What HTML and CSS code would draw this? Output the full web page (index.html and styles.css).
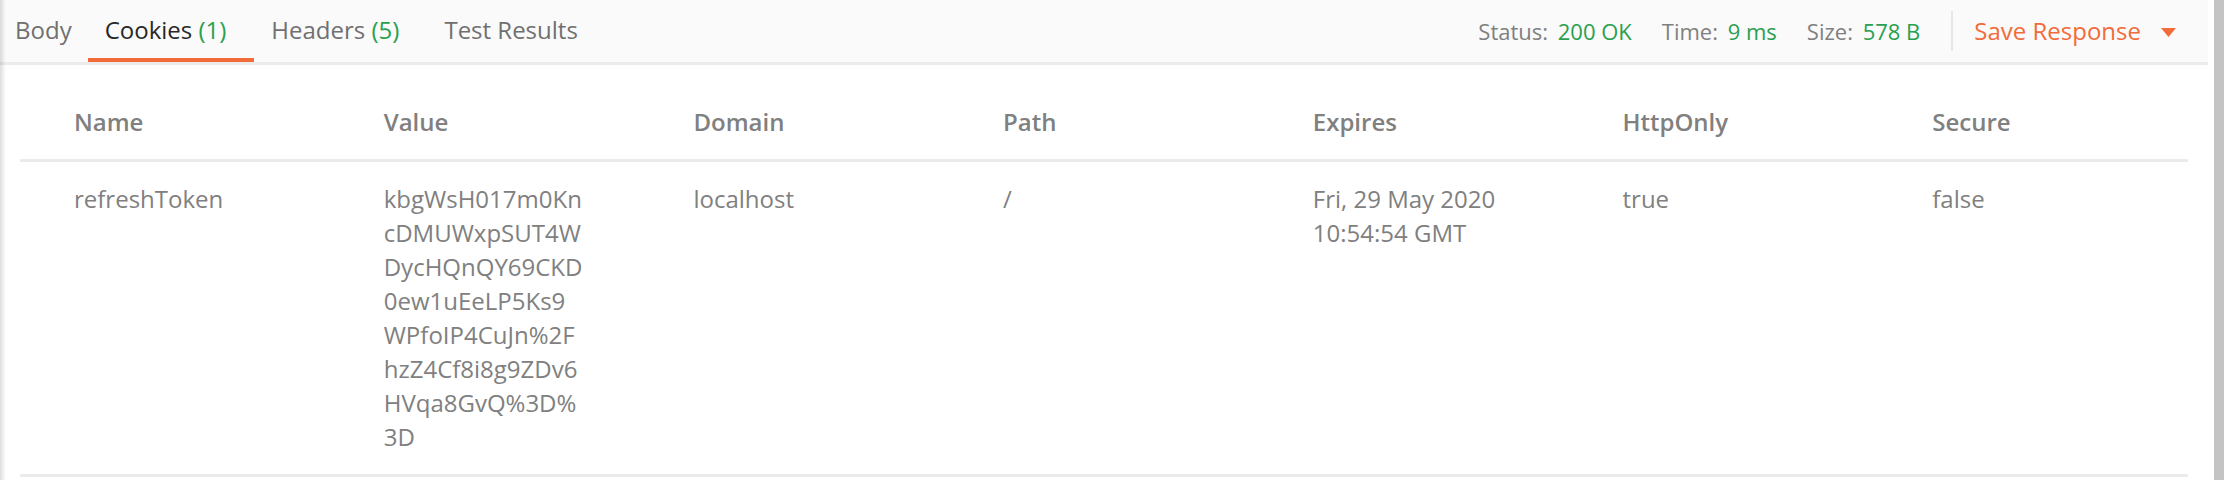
FILE: index.html
```html
<!DOCTYPE html>
<html>
<head>
<meta charset="utf-8">
<link rel="stylesheet" href="styles.css">
</head>
<body>
<div class="app">
  <div class="panel">
    <div class="topbar">
      <nav class="tabs">
        <div class="tab first">Body</div>
        <div class="tab active">Cookies <span class="count">(1)</span></div>
        <div class="tab">Headers <span class="count">(5)</span></div>
        <div class="tab">Test Results</div>
      </nav>
      <div class="meta">
        <span class="stat">Status: <span class="val">200 OK</span></span>
        <span class="stat">Time: <span class="val">9 ms</span></span>
        <span class="stat">Size: <span class="val">578 B</span></span>
        <span class="sep"></span>
        <div class="save">Save Response
          <svg class="caret" width="15" height="9" viewBox="0 0 15 9"><polygon points="0,0 15,0 7.5,9" fill="#f26b3a"/></svg>
        </div>
      </div>
    </div>
    <table class="cookies">
      <thead>
        <tr>
          <th>Name</th>
          <th>Value</th>
          <th>Domain</th>
          <th>Path</th>
          <th>Expires</th>
          <th>HttpOnly</th>
          <th>Secure</th>
        </tr>
      </thead>
      <tbody>
        <tr>
          <td>refreshToken</td>
          <td class="value">kbgWsH017m0KncDMUWxpSUT4WDycHQnQY69CKD0ew1uEeLP5Ks9WPfoIP4CuJn%2FhzZ4Cf8i8g9ZDv6HVqa8GvQ%3D%3D</td>
          <td>localhost</td>
          <td>/</td>
          <td>Fri, 29 May 2020 10:54:54 GMT</td>
          <td>true</td>
          <td>false</td>
        </tr>
      </tbody>
    </table>
  </div>
  <div class="scroll"><div class="thumb"></div></div>
</div>
</body>
</html>
```

FILE: styles.css
```css
html, body {
  margin: 0;
  padding: 0;
  background: #ffffff;
}
body {
  width: 2224px;
  height: 480px;
  overflow: hidden;
  font-family: "Open Sans", "Noto Sans", "Liberation Sans", sans-serif;
  font-size: 24px;
  line-height: 34px;
  color: #808080;
}
.app {
  display: flex;
  height: 480px;
}
.panel {
  position: relative;
  flex: 1;
  min-width: 0;
}
.panel::before {
  content: "";
  position: absolute;
  left: 0;
  top: 0;
  bottom: 0;
  width: 6px;
  background: linear-gradient(to right, rgba(0,0,0,0.13), rgba(0,0,0,0));
  z-index: 2;
}
.topbar {
  display: flex;
  align-items: stretch;
  height: 62px;
  background: #fafafa;
  border-bottom: 3px solid #ebebeb;
}
.tabs {
  display: flex;
  align-items: stretch;
}
.tab {
  display: flex;
  align-items: center;
  box-sizing: border-box;
  height: 62px;
  padding: 1px 17px 0;
  border-bottom: 4px solid transparent;
  color: #707070;
  white-space: pre;
}
.tab.first {
  padding-left: 15px;
  padding-right: 16px;
}
.tab.active {
  color: #282828;
  border-bottom-color: #f26b3a;
}
.count {
  color: #28a04f;
  margin-right: 11px;
}
.meta {
  margin-left: auto;
  display: flex;
  align-items: center;
  padding-right: 32px;
}
.stat {
  color: #808080;
  font-size: 22px;
  margin-right: 30px;
  white-space: pre;
}
.val {
  color: #28a04f;
  margin-left: 4px;
}
.sep {
  width: 2px;
  height: 40px;
  background: #e6e6e6;
  margin-left: 1px;
  margin-right: 21px;
}
.save {
  display: flex;
  align-items: center;
  color: #f26b3a;
  gap: 20px;
}
.caret {
  display: block;
  margin-top: 2px;
}
.cookies {
  width: calc(100% - 40px);
  margin: 20px 20px 0;
  border-collapse: collapse;
  table-layout: fixed;
}
.cookies th,
.cookies td {
  text-align: left;
  vertical-align: top;
  padding: 20px 52px 20px 54px;
  color: #808080;
}
.cookies th {
  font-weight: 600;
  border-bottom: 3px solid #ebebeb;
}
.cookies td {
  font-weight: 400;
  border-bottom: 3px solid #ebebeb;
}
.cookies td.value {
  word-break: break-all;
}
.scroll {
  width: 16px;
  display: flex;
  justify-content: flex-end;
  background: #ffffff;
}
.thumb {
  width: 10px;
  height: 480px;
  background: #c4c4c4;
}
```
